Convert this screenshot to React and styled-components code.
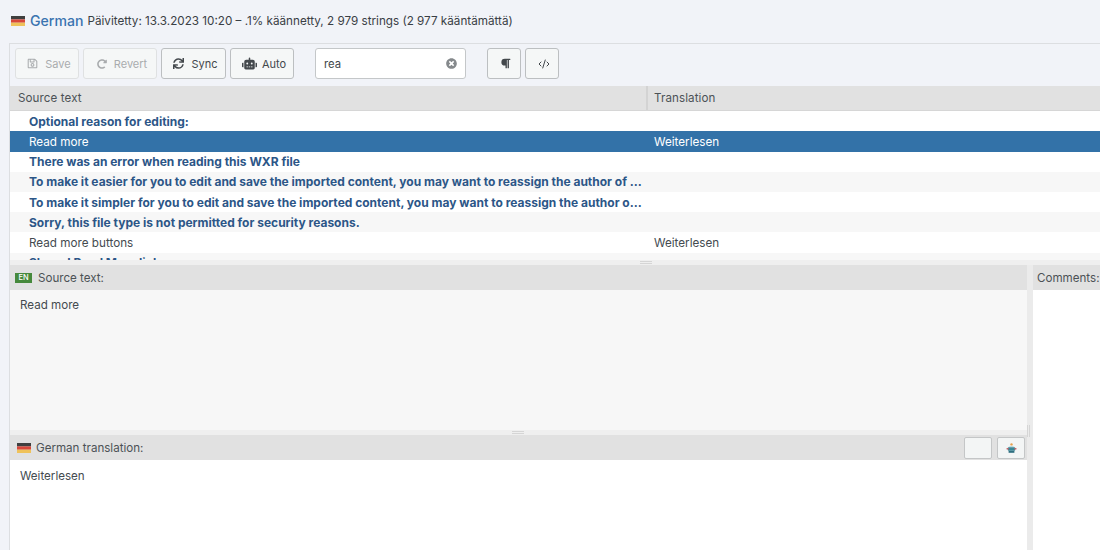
import React from "react"
import styled, { createGlobalStyle } from "styled-components"
import { FaRegSave, FaRedoAlt, FaSync, FaRobot, FaParagraph, FaTimesCircle } from "react-icons/fa"
import { CodeXml } from "lucide-react"

const GlobalStyle = createGlobalStyle`
  html, body {
    margin: 0;
    height: 100%;
    overflow: hidden;
    background: #f1f3f8;
    font-family: Inter, "Open Sans", "Liberation Sans", sans-serif;
    color: #444b50;
    -webkit-font-smoothing: antialiased;
  }
`

const Page = styled.div`
  width: 1100px;
  height: 550px;
  overflow: hidden;
  display: flex;
  flex-direction: column;
`

const Title = styled.div`
  height: 43px;
  box-sizing: border-box;
  padding: 0 0 2px 11px;
  display: flex;
  align-items: center;
  gap: 4px;
  font-size: 11.7px;
  color: #3a4045;
`

const TitleLang = styled.span`
  font-size: 14.1px;
  font-weight: 500;
  color: #3a73b0;
  margin-left: 1px;
`

const Panel = styled.div`
  flex: 1;
  min-height: 0;
  margin-left: 9px;
  border-top: 1px solid #dcdee1;
  border-left: 1px solid #dcdee1;
  display: flex;
  flex-direction: column;
`

const Toolbar = styled.div`
  height: 42px;
  flex: none;
  box-sizing: border-box;
  padding: 4px 0 0 5px;
  display: flex;
  align-items: flex-start;
`

const Button = styled.button`
  height: 31px;
  width: ${p => p.$width}px;
  margin-right: ${p => p.$after ?? 4}px;
  padding: 0 0 0 4px;
  box-sizing: border-box;
  display: flex;
  align-items: center;
  justify-content: center;
  gap: ${p => p.$gap ?? 7}px;
  font: inherit;
  font-size: 11px;
  color: ${p => (p.disabled ? "#a9acae" : "#43484c")};
  background: #f5f7f7;
  border: 1px solid ${p => (p.disabled ? "#dfe1e2" : "#bcbfc1")};
  border-radius: 3px;
  svg {
    flex: none;
  }
`

const IconButton = styled(Button)`
  padding: 0 0 0 3px;
`

const SearchBox = styled.div`
  width: 151px;
  height: 31px;
  margin: 0 21px;
  box-sizing: border-box;
  padding: 0 8px;
  display: flex;
  align-items: center;
  justify-content: space-between;
  font-size: 11.3px;
  color: #43484c;
  background: #fff;
  border: 1px solid #c4c7c9;
  border-radius: 3px;
  svg {
    color: #85898c;
  }
`

const TableHead = styled.div`
  height: 25px;
  flex: none;
  display: flex;
  align-items: center;
  font-size: 11.6px;
  letter-spacing: 0.1px;
  color: #4c5256;
  background: #e1e1e1;
  border-bottom: 1px solid #d6d6d6;
  box-sizing: border-box;
`

const HeadCell = styled.div`
  box-sizing: border-box;
  height: 100%;
  display: flex;
  align-items: center;
  &:first-child {
    width: 638px;
    padding-left: 8px;
    border-right: 2px solid #d3d3d3;
  }
  &:last-child {
    padding-left: 6px;
  }
`

const Rows = styled.div`
  height: 149px;
  flex: none;
  box-sizing: border-box;
  padding-top: 0.3px;
  overflow: hidden;
  background: #fff;
`

const Row = styled.div`
  height: 20.2px;
  display: flex;
  align-items: center;
  font-size: ${p => (p.$bold ? 12 : 11.7)}px;
  font-weight: ${p => (p.$bold ? 700 : 400)};
  color: ${p => (p.$selected ? "#fff" : p.$bold ? "#2c5687" : "#444b50")};
  background: ${p => (p.$selected ? "#3372a8" : p.$odd ? "#f7f7f7" : "#fff")};
`

const SourceCell = styled.div`
  width: 637px;
  flex: none;
  box-sizing: border-box;
  padding: 0 5px 0 19px;
  white-space: nowrap;
  overflow: hidden;
  text-overflow: ellipsis;
`

const TargetCell = styled.div`
  padding-left: 7px;
  font-size: 11.7px;
  font-weight: 400;
`

const SplitterH = styled.div`
  height: ${p => p.$height}px;
  flex: none;
  box-sizing: border-box;
  padding-left: ${p => p.$handleAt}px;
  display: flex;
  align-items: center;
  background: #efefef;
  &::before {
    content: "";
    width: 12px;
    height: 3px;
    border-top: 1px solid #d5d5d5;
    border-bottom: 1px solid #d5d5d5;
    box-sizing: border-box;
  }
`

const Lower = styled.div`
  flex: 1;
  min-height: 0;
  display: flex;
  background: #fff;
`

const EditorColumn = styled.div`
  width: 1017px;
  flex: none;
  display: flex;
  flex-direction: column;
`

const PaneHead = styled.div`
  height: 25px;
  flex: none;
  box-sizing: border-box;
  padding-left: ${p => p.$pad}px;
  padding-right: 2px;
  display: flex;
  align-items: center;
  gap: ${p => p.$gap ?? 5}px;
  font-size: 11.6px;
  color: #4c5256;
  background: #e1e1e1;
`

const EnBadge = styled.span`
  width: 17px;
  height: 10px;
  display: flex;
  align-items: center;
  justify-content: center;
  font-size: 7.5px;
  font-weight: 500;
  color: #fff;
  background: #46893c;
`

const SourceBody = styled.div`
  height: 140px;
  flex: none;
  box-sizing: border-box;
  padding: 8px 10px;
  font-size: 11.6px;
  color: #444b50;
  background: #f7f7f7;
`

const TargetBody = styled.div`
  flex: 1;
  padding: 9px 10px;
  font-size: 11.6px;
  color: #444b50;
  background: #fff;
`

const PaneTools = styled.div`
  margin: 1px 0 0 auto;
  display: flex;
  gap: 5px;
`

const SmallButton = styled.button`
  width: 28px;
  height: 22px;
  padding: 0;
  display: flex;
  align-items: center;
  justify-content: center;
  box-sizing: border-box;
  background: #f3f5f5;
  border: 1px solid #c4c6c7;
  border-radius: 2px;
`

const SplitterV = styled.div`
  width: 6px;
  flex: none;
  box-sizing: border-box;
  padding-top: 160px;
  background: #ebebeb;
  &::before {
    content: "";
    display: block;
    width: 3px;
    height: 12px;
    border-left: 1px solid #d5d5d5;
    border-right: 1px solid #d5d5d5;
    box-sizing: border-box;
  }
`

const CommentsColumn = styled.div`
  flex: 1;
  display: flex;
  flex-direction: column;
`

const FlagBox = styled.svg`
  width: 14px;
  height: 10px;
  flex: none;
`

const Flag = () => (
  <FlagBox viewBox="0 0 14 10">
    <rect width="14" height="3.4" y="0" fill="#3f3f3f" />
    <rect width="14" height="3.3" y="3.4" fill="#d8473a" />
    <rect width="14" height="3.3" y="6.7" fill="#efc25a" />
  </FlagBox>
)

const Teapot = () => (
  <svg width="11" height="11" viewBox="0 0 11 11">
    <circle cx="5.5" cy="1.4" r="1.2" fill="#e8a04c" />
    <path d="M2.5 4.2 C3 2.8 8 2.8 8.5 4.2 Z" fill="#a8cfd8" />
    <rect x="1.8" y="4.2" width="7.4" height="3.6" rx="0.8" fill="#3c8796" />
    <rect x="0.6" y="5" width="2" height="1.5" fill="#c7656a" />
    <rect x="8.4" y="5" width="2" height="1.5" fill="#c7656a" />
    <rect x="2.6" y="7.8" width="5.8" height="2" fill="#2f6f80" />
  </svg>
)

const rows = [
  { source: "Optional reason for editing:", bold: true },
  { source: "Read more", target: "Weiterlesen", selected: true },
  { source: "There was an error when reading this WXR file", bold: true },
  { source: "To make it easier for you to edit and save the imported content, you may want to reassign the author of the imported item to an existing user", bold: true },
  { source: "To make it simpler for you to edit and save the imported content, you may want to reassign the author of the imported item", bold: true },
  { source: "Sorry, this file type is not permitted for security reasons.", bold: true },
  { source: "Read more buttons", target: "Weiterlesen" },
  { source: "Shared Read More link", bold: true },
]

export default function App() {
  return (
    <Page>
      <GlobalStyle />
      <Title>
        <Flag />
        <TitleLang>German</TitleLang>
        <span>Päivitetty: 13.3.2023 10:20 – .1% käännetty, 2 979 strings (2 977 kääntämättä)</span>
      </Title>
      <Panel>
        <Toolbar>
          <Button disabled $width={64}><FaRegSave size={11} />Save</Button>
          <Button disabled $width={74}><FaRedoAlt size={10} />Revert</Button>
          <Button $width={65}><FaSync size={11} />Sync</Button>
          <Button $width={64} $gap={5} $after={0}><FaRobot size={15} />Auto</Button>
          <SearchBox>rea<FaTimesCircle size={11} /></SearchBox>
          <IconButton $width={34}><FaParagraph size={11} /></IconButton>
          <IconButton $width={34}><CodeXml size={12} /></IconButton>
        </Toolbar>
        <TableHead>
          <HeadCell>Source text</HeadCell>
          <HeadCell>Translation</HeadCell>
        </TableHead>
        <Rows>
          {rows.map((row, i) => (
            <Row key={row.source} $bold={row.bold} $selected={row.selected} $odd={i % 2 === 1}>
              <SourceCell>{row.source}</SourceCell>
              <TargetCell>{row.target}</TargetCell>
            </Row>
          ))}
        </Rows>
        <SplitterH $height={5} $handleAt={630} />
        <Lower>
          <EditorColumn>
            <PaneHead $pad={5} $gap={6}>
              <EnBadge>EN</EnBadge>
              Source text:
            </PaneHead>
            <SourceBody>Read more</SourceBody>
            <SplitterH $height={5} $handleAt={502} />
            <PaneHead $pad={7}>
              <Flag />
              German translation:
              <PaneTools>
                <SmallButton />
                <SmallButton><Teapot /></SmallButton>
              </PaneTools>
            </PaneHead>
            <TargetBody>Weiterlesen</TargetBody>
          </EditorColumn>
          <SplitterV />
          <CommentsColumn>
            <PaneHead $pad={4}>Comments:</PaneHead>
          </CommentsColumn>
        </Lower>
      </Panel>
    </Page>
  )
}
